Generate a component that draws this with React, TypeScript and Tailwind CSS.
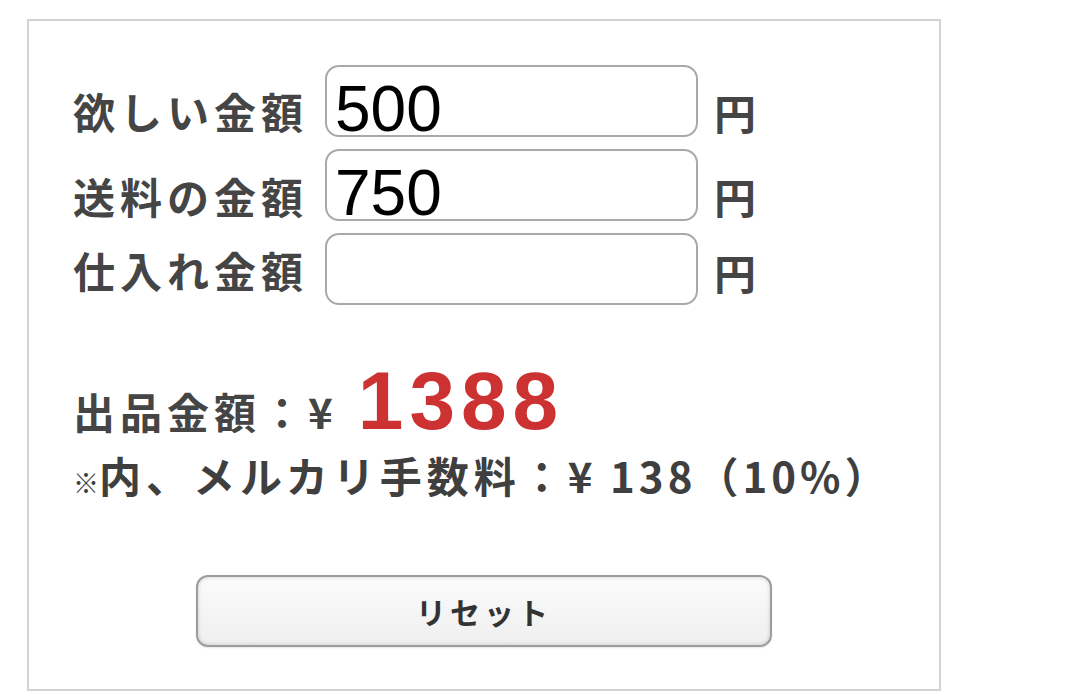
import React from "react";

const jp = "font-[family-name:Noto_Sans_CJK_JP,sans-serif]";

function Row({ label, value, labelMt, yenMt }: { label: string; value: string; labelMt: string; yenMt: string }) {
  return (
    <div className="flex items-start h-[72px]">
      <div className={`w-[252px] shrink-0 text-[42px] leading-[42px] tracking-[5px] font-semibold text-[#454545] ${jp} ${labelMt}`}>
        {label}
      </div>
      <input
        type="text"
        defaultValue={value}
        className="w-[373px] h-[72px] shrink-0 rounded-[14px] border-2 border-[#a9a9a9] bg-white pl-[8px] pt-[16px] pb-0 text-[64px] leading-[64px] text-black font-[family-name:Liberation_Sans,Arial,sans-serif] outline-none"
      />
      <div className={`ml-[16px] text-[42px] leading-[42px] font-semibold text-[#454545] ${jp} ${yenMt}`}>円</div>
    </div>
  );
}

export default function App() {
  return (
    <div className="w-[1080px] h-[700px] bg-white">
      <div className="ml-[27px] mt-[19px] w-[914px] h-[672px] border-2 border-[#d3d3d3] bg-white flex flex-col">
        <div className="pl-[44px] pt-[44px] flex flex-col gap-[12px]">
          <Row label="欲しい金額" value="500" labelMt="mt-[25px]" yenMt="mt-[26px]" />
          <Row label="送料の金額" value="750" labelMt="mt-[26px]" yenMt="mt-[26px]" />
          <Row label="仕入れ金額" value="" labelMt="mt-[16px]" yenMt="mt-[18px]" />
        </div>
        <div className="pl-[44px] mt-[55px]">
          <div className="flex items-baseline">
            <span className={`text-[42px] leading-[42px] tracking-[5px] font-semibold text-[#454545] ${jp}`}>出品金額：¥</span>
            <span className="ml-[20px] text-[82px] leading-[82px] tracking-[6px] font-bold text-[#cd3232] font-[family-name:Liberation_Sans,Arial,sans-serif]">
              1388
            </span>
          </div>
          <div className={`mt-[12px] h-[42px] text-[42px] leading-[42px] tracking-[5px] font-semibold text-[#3f3f3f] ${jp}`}>
            <span className="text-[26px] tracking-[0px] font-bold">※</span>内、メルカリ手数料：<span className="font-bold tracking-[4px]">¥ 138（10%）</span>
          </div>
        </div>
        <div className="mt-[79px] flex justify-center">
          <button
            type="button"
            className={`w-[576px] h-[72px] rounded-[12px] border-2 border-[#9c9c9c] bg-gradient-to-b from-[#fbfbfb] to-[#efefef] shadow-[inset_0_0_4px_rgba(0,0,0,0.18),0_1px_2px_rgba(0,0,0,0.1)] text-[30px] leading-[30px] tracking-[4px] font-bold text-[#333] ${jp}`}
          >
            リセット
          </button>
        </div>
      </div>
    </div>
  );
}
